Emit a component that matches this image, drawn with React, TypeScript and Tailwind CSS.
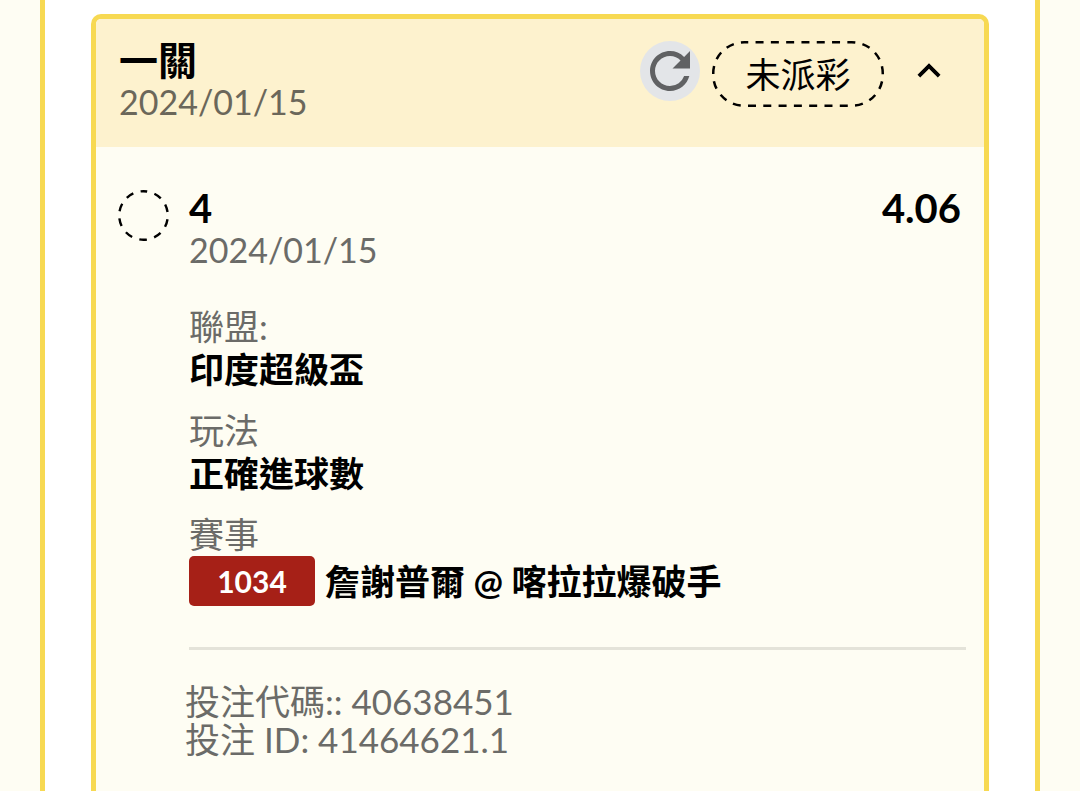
import { MdKeyboardArrowUp, MdRefresh } from "react-icons/md";

type Field = { label: string; value: string; code?: string };

const fields: Field[] = [
  { label: "聯盟:", value: "印度超級盃" },
  { label: "玩法", value: "正確進球數" },
  { label: "賽事", value: "詹謝普爾 @ 喀拉拉爆破手", code: "1034" },
];

function StatusPill({ children }: { children: string }) {
  return (
    <div className="relative flex h-[66px] w-[172px] items-center justify-center">
      <svg className="absolute inset-0 h-full w-full" viewBox="0 0 172 66" fill="none" aria-hidden="true">
        <rect
          x="1.25"
          y="1.25"
          width="169.5"
          height="63.5"
          rx="31"
          stroke="#000"
          strokeWidth="2.5"
          strokeDasharray="8 7.3"
          strokeDashoffset="4"
        />
      </svg>
      <span className="text-[35px] leading-[42px] text-black">{children}</span>
    </div>
  );
}

function PendingMark() {
  return (
    <svg className="mt-[3px] h-[51px] w-[51px] shrink-0" viewBox="0 0 51 51" fill="none" aria-hidden="true">
      <circle
        cx="25.5"
        cy="25.5"
        r="24.3"
        stroke="#000"
        strokeWidth="2.4"
        strokeDasharray="7.8 7.47"
        strokeDashoffset="4"
        transform="rotate(-90 25.5 25.5)"
      />
    </svg>
  );
}

function FieldBlock({ label, value, code }: Field) {
  return (
    <div className="text-[35px] leading-[43px]">
      <dt className="text-[#6b6b68]">{label}</dt>
      <dd className="flex items-center gap-[10px] font-bold text-black">
        {code && (
          <span className="flex h-[50px] w-[126px] items-center justify-center rounded-[5px] bg-[#a62017] text-[30px] text-white">
            {code}
          </span>
        )}
        <span>{value}</span>
      </dd>
    </div>
  );
}

export default function App() {
  return (
    <div className="flex h-screen flex-col overflow-hidden bg-[#fefdf3] px-10 font-['Lato','Noto_Sans_CJK_TC',sans-serif]">
      <main className="flex flex-1 flex-col border-x-[5px] border-[#f7d952] bg-white px-[46px] pt-[14px]">
        <article className="flex-1 overflow-hidden rounded-t-[10px] border-x-[5px] border-t-[5px] border-[#f7d952] bg-[#fefdf3]">
          <header className="flex h-32 items-start justify-between bg-[#fdf2ce] pt-5 pr-8 pl-[23px]">
            <div className="leading-[42px]">
              <h1 className="text-[39px] font-bold text-black">一關</h1>
              <p className="text-[34px] text-[#6b675a]">2024/01/15</p>
            </div>
            <div className="flex items-start pt-[2px]">
              <button
                type="button"
                aria-label="重新整理"
                className="flex h-[60px] w-[60px] items-center justify-center rounded-full bg-[#e3e5e8] text-[#606163]"
              >
                <MdRefresh size={60} />
              </button>
              <div className="ml-3">
                <StatusPill>未派彩</StatusPill>
              </div>
              <button
                type="button"
                aria-label="收合"
                aria-expanded="true"
                className="ml-[22px] flex h-[60px] items-center text-black"
              >
                <MdKeyboardArrowUp size={46} />
              </button>
            </div>
          </header>

          <section className="flex gap-5 pt-10 pr-[18px] pl-[22px]">
            <PendingMark />
            <div className="min-w-0 flex-1">
              <div className="flex justify-between pr-[5px] text-[40px] leading-[42px] font-bold text-black">
                <h2>4</h2>
                <span>4.06</span>
              </div>
              <p className="text-[34px] leading-[42px] text-[#6b6b68]">2024/01/15</p>
              <dl className="mt-[34px] flex flex-col gap-[18px]">
                {fields.map((field) => (
                  <FieldBlock key={field.label} {...field} />
                ))}
              </dl>
              <hr className="mt-[41px] border-t-[3px] border-[#e4e3d9]" />
              <div className="-ml-1 mt-8 text-[35px] leading-[38px] text-[#6b6b68]">
                <p>投注代碼:: 40638451</p>
                <p>投注 ID: 41464621.1</p>
              </div>
            </div>
          </section>
        </article>
      </main>
    </div>
  );
}
